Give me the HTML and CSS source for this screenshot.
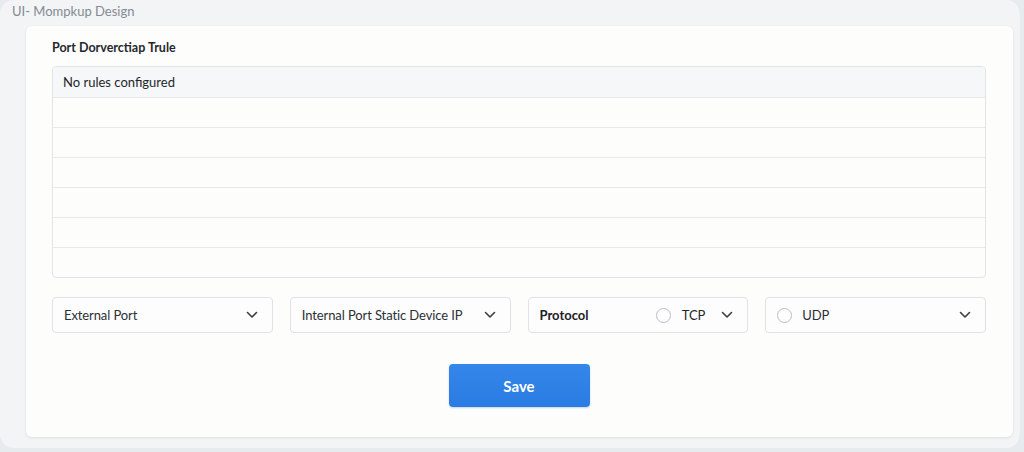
FILE: index.html
```html
<!DOCTYPE html>
<html>
<head>
<meta charset="utf-8">
<link rel="stylesheet" href="styles.css">
</head>
<body>
<div class="frame">
  <div class="app-title">UI- Mompkup Design</div>
  <div class="card">
    <h2 class="heading">Port Dorverctiap Trule</h2>
    <div class="rules">
      <div class="row head">No rules configured</div>
      <div class="row"></div>
      <div class="row"></div>
      <div class="row"></div>
      <div class="row"></div>
      <div class="row"></div>
      <div class="row"></div>
    </div>
    <div class="fields">
      <div class="select">
        <span class="label">External Port</span>
        <svg class="chev" width="12" height="8" viewBox="0 0 12 8"><path d="M1.5 1.5 L6 6 L10.5 1.5" fill="none" stroke="#3a3f45" stroke-width="1.6" stroke-linecap="round" stroke-linejoin="round"/></svg>
      </div>
      <div class="select">
        <span class="label">Internal Port Static Device IP</span>
        <svg class="chev" width="12" height="8" viewBox="0 0 12 8"><path d="M1.5 1.5 L6 6 L10.5 1.5" fill="none" stroke="#3a3f45" stroke-width="1.6" stroke-linecap="round" stroke-linejoin="round"/></svg>
      </div>
      <div class="select">
        <span class="label strong">Protocol</span>
        <span class="radio"></span>
        <span class="opt">TCP</span>
        <svg class="chev" width="12" height="8" viewBox="0 0 12 8"><path d="M1.5 1.5 L6 6 L10.5 1.5" fill="none" stroke="#3a3f45" stroke-width="1.6" stroke-linecap="round" stroke-linejoin="round"/></svg>
      </div>
      <div class="select">
        <span class="radio first"></span>
        <span class="label">UDP</span>
        <svg class="chev" width="12" height="8" viewBox="0 0 12 8"><path d="M1.5 1.5 L6 6 L10.5 1.5" fill="none" stroke="#3a3f45" stroke-width="1.6" stroke-linecap="round" stroke-linejoin="round"/></svg>
      </div>
    </div>
    <div class="actions">
      <button class="save">Save</button>
    </div>
  </div>
</div>
</body>
</html>
```
FILE: styles.css
```css
* { box-sizing: border-box; }
html, body { margin: 0; padding: 0; }
body {
  background: #e8ebee;
  font-family: Lato, "Noto Sans", sans-serif;
  width: 1024px;
  height: 452px;
  overflow: hidden;
}
.frame {
  width: 1020px;
  height: 448px;
  background: #f2f4f6;
  border-radius: 14px;
  padding-top: 1px;
}
.app-title {
  height: 25px;
  padding-left: 12px;
  padding-top: 1px;
  font-size: 13px;
  color: #858a91;
  line-height: 18px;
}
.card {
  margin-left: 26px;
  width: 987px;
  height: 411px;
  background: #fdfdfc;
  border-radius: 6px;
  box-shadow: 0 1px 3px rgba(0, 0, 0, 0.09);
  padding: 14px 27px 0 26px;
}
.heading {
  margin: 0 0 10px 0;
  font-size: 12.5px;
  font-weight: 700;
  color: #24282d;
  line-height: 16px;
}
.rules {
  border: 1px solid #e1e4e7;
  border-radius: 4px;
  overflow: hidden;
}
.row {
  height: 30px;
  border-top: 1px solid #e7e9eb;
}
.row.head {
  height: 30px;
  border-top: none;
  background: #f6f7f8;
  font-size: 13px;
  color: #23272b;
  line-height: 30px;
  padding-left: 10px;
}
.fields {
  margin-top: 19px;
  display: grid;
  grid-template-columns: repeat(4, 1fr);
  gap: 17px;
}
.select {
  height: 36px;
  border: 1px solid #dfe2e6;
  border-radius: 4px;
  background: #fdfdfd;
  display: flex;
  align-items: center;
  padding: 0 14px 0 11px;
  font-size: 13px;
  color: #2b3035;
  letter-spacing: -0.1px;
}
.label { flex: 1; white-space: nowrap; }
.label.strong { color: #1d2125; font-weight: 700; letter-spacing: 0; }
.radio {
  width: 15px;
  height: 15px;
  border: 1.3px solid #b8bcc1;
  border-radius: 50%;
  background: #fff;
  margin-right: 11px;
}
.radio.first { margin-right: 10px; }
.opt { margin-right: 16px; color: #22262a; }
.chev { flex: none; }
.actions {
  display: flex;
  justify-content: center;
  margin-top: 31px;
}
.save {
  width: 141px;
  height: 43px;
  border: none;
  border-radius: 4px;
  background: linear-gradient(180deg, #3486ea, #2b7ce2);
  color: #fff;
  font-family: Lato, "Noto Sans", sans-serif;
  font-size: 15px;
  font-weight: 700;
  box-shadow: 0 1px 2px rgba(30, 90, 180, 0.25);
}
```
